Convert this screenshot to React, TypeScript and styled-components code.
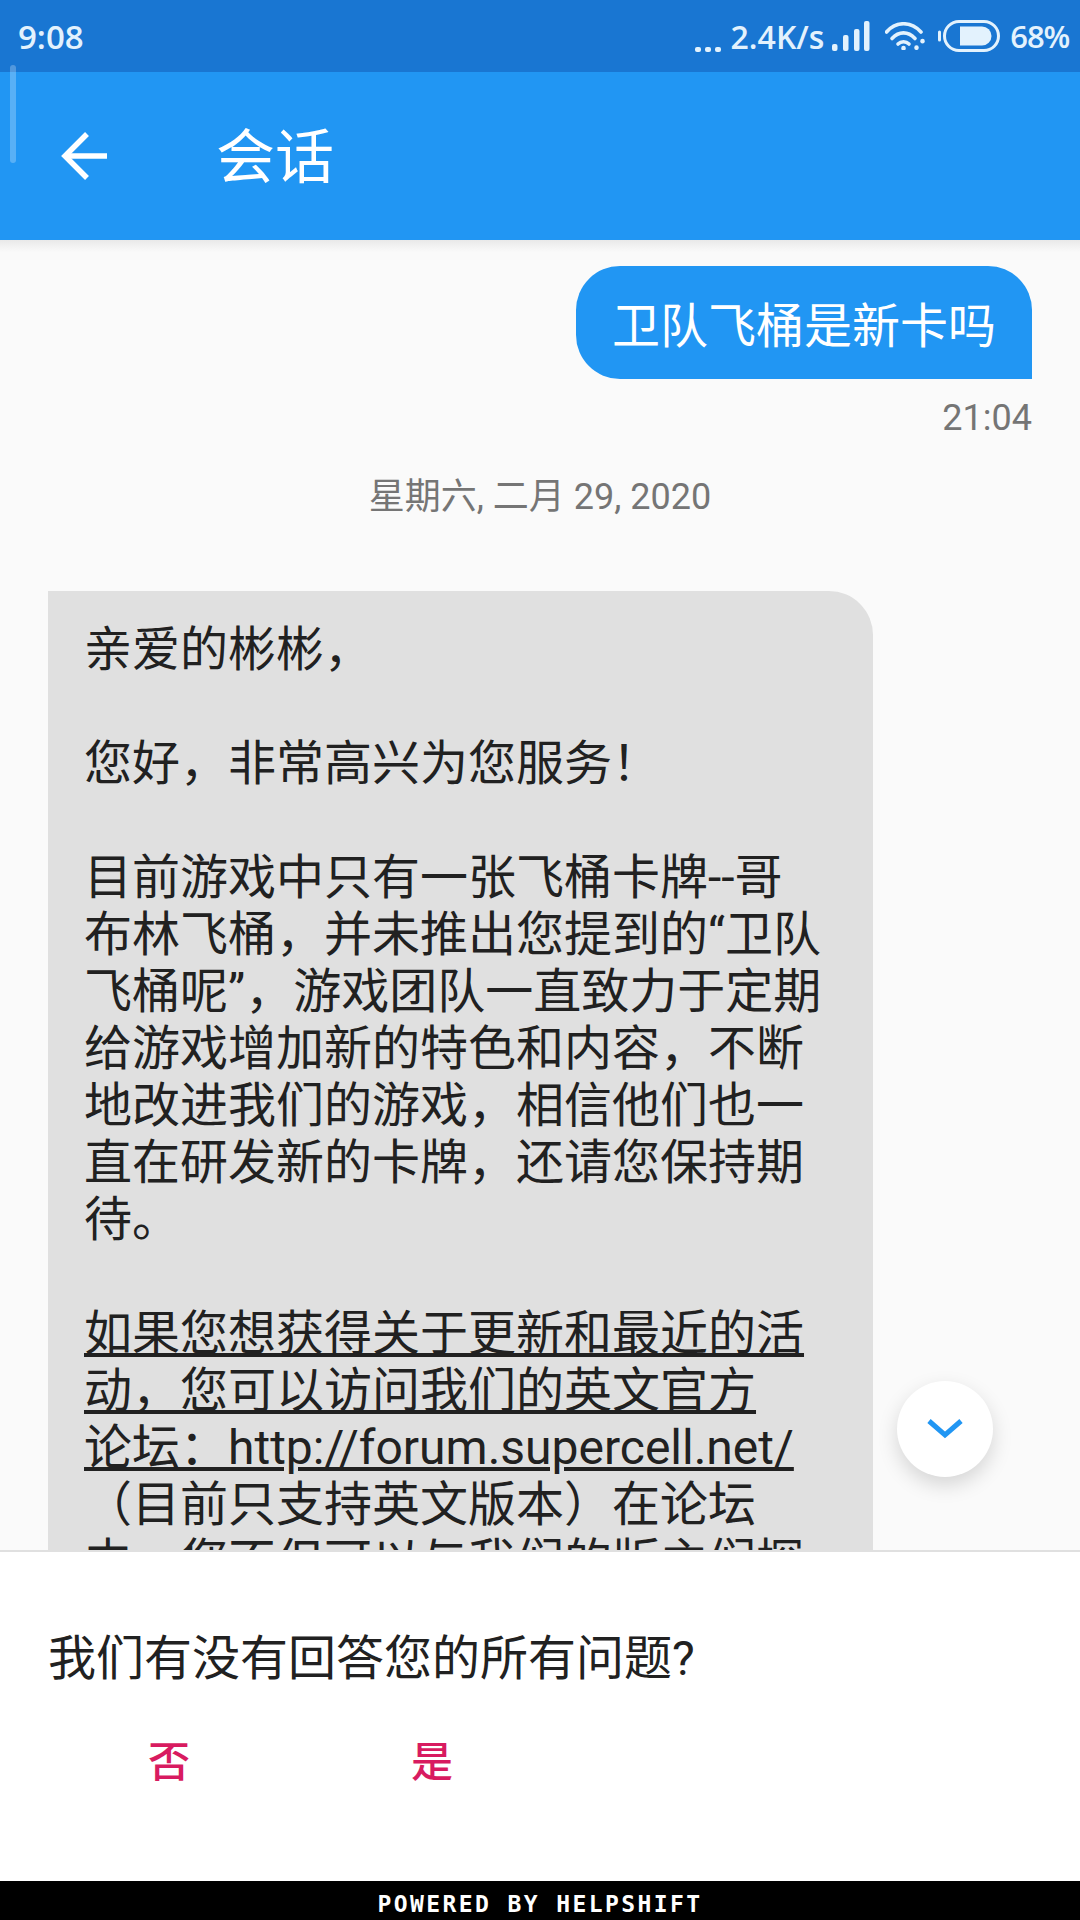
import React from 'react'
import styled, { createGlobalStyle } from 'styled-components'

const GlobalStyle = createGlobalStyle`
  html, body {
    margin: 0;
    padding: 0;
    background: #fafafa;
  }
  * {
    box-sizing: border-box;
  }
`

const Screen = styled.div`
  position: relative;
  width: 1080px;
  height: 1920px;
  display: flex;
  flex-direction: column;
  overflow: hidden;
  background: #fafafa;
  font-family: Roboto, 'Noto Sans CJK SC', sans-serif;
`

const StatusBar = styled.div`
  height: 72px;
  flex: none;
  display: flex;
  align-items: center;
  justify-content: space-between;
  padding: 0 11px 0 18px;
  background: #1976d2;
  color: #e3f2fd;
  font-family: 'Open Sans', sans-serif;
  font-weight: 600;
  font-size: 33px;
`

const StatusRight = styled.div`
  display: flex;
  align-items: center;
`

const Dots = styled.span`
  display: flex;
  gap: 4px;
  margin-top: 26px;
`

const Dot = styled.span`
  width: 6px;
  height: 5px;
  border-radius: 2px;
  background: #e3f2fd;
`

const Speed = styled.span`
  margin-left: 10px;
  font-size: 32px;
`

const StatusIcon = styled.span<{ $gap: number }>`
  display: flex;
  margin-left: ${(p) => p.$gap}px;
`

const Percent = styled.span`
  margin-left: 10px;
  font-size: 31px;
  letter-spacing: -1.2px;
`

const AppBar = styled.div`
  position: relative;
  z-index: 2;
  height: 168px;
  flex: none;
  display: flex;
  align-items: center;
  padding-left: 60px;
  background: #2196f3;
  color: #fff;
`

const Title = styled.h1`
  margin: 2px 0 0 108px;
  font-size: 59px;
  font-weight: 400;
  line-height: 1;
`

const ScrollThumb = styled.div`
  position: absolute;
  left: 10px;
  top: 65px;
  width: 6px;
  height: 98px;
  border-radius: 3px;
  background: rgba(255, 255, 255, 0.25);
  z-index: 3;
`

const Chat = styled.div`
  position: relative;
  flex: 1;
  min-height: 0;
  display: flex;
  flex-direction: column;
  padding: 26px 48px 0;
  overflow: hidden;
  &::before {
    content: '';
    position: absolute;
    left: 0;
    right: 0;
    top: 0;
    height: 12px;
    background: linear-gradient(#e9e9e9, #fafafa);
  }
`

const SentBubble = styled.div`
  position: relative;
  flex: none;
  align-self: flex-end;
  height: 113px;
  display: flex;
  align-items: center;
  padding: 0 36px 2px;
  border-radius: 44px 44px 0 44px;
  background: #2196f3;
  color: #fff;
  font-size: 48px;
`

const SentTime = styled.div`
  flex: none;
  align-self: flex-end;
  margin-top: 18px;
  color: #757575;
  font-size: 36px;
  line-height: 42px;
`

const DateLabel = styled.div`
  flex: none;
  align-self: center;
  margin-top: 37px;
  color: #757575;
  font-size: 36px;
  line-height: 42px;
`

const ReceivedBubble = styled.div`
  flex: none;
  margin-top: 73px;
  width: 825px;
  padding: 30px 36px 40px;
  border-radius: 0 44px 44px 44px;
  background: #e0e0e0;
  color: #212121;
  font-size: 48px;
  line-height: 57px;
  white-space: nowrap;
`

const Line = styled.div<{ $link?: boolean }>`
  min-height: 57px;
  text-decoration: ${(p) => (p.$link ? 'underline' : 'none')};
`

const ScrollButton = styled.div`
  position: absolute;
  left: 897px;
  top: 1141px;
  width: 96px;
  height: 96px;
  display: flex;
  align-items: center;
  justify-content: center;
  border-radius: 50%;
  background: #fff;
  box-shadow: 0 8px 20px rgba(0, 0, 0, 0.15);
`

const Sheet = styled.div`
  position: relative;
  z-index: 2;
  height: 331px;
  flex: none;
  padding: 0 48px;
  background: #fff;
  border-top: 2px solid #e0e0e0;
`

const Question = styled.div`
  margin-top: 78px;
  color: #212121;
  font-size: 48px;
  line-height: 57px;
`

const Answers = styled.div`
  display: flex;
  margin-top: 51px;
`

const Answer = styled.div`
  width: 263px;
  padding-left: 100px;
  color: #d81b60;
  font-size: 42px;
  font-weight: 500;
  line-height: 50px;
`

const Footer = styled.div`
  height: 39px;
  flex: none;
  display: flex;
  align-items: center;
  justify-content: center;
  padding-top: 6px;
  background: #000;
  color: #fff;
  font-family: 'DejaVu Sans Mono', monospace;
  font-weight: 700;
  font-size: 23px;
  letter-spacing: 2.4px;
`

const bubbleLines = [
  '亲爱的彬彬，',
  '',
  '您好，非常高兴为您服务！',
  '',
  '目前游戏中只有一张飞桶卡牌--哥',
  '布林飞桶，并未推出您提到的“卫队',
  '飞桶呢”，游戏团队一直致力于定期',
  '给游戏增加新的特色和内容，不断',
  '地改进我们的游戏，相信他们也一',
  '直在研发新的卡牌，还请您保持期',
  '待。',
  '',
]

const linkLines = [
  '如果您想获得关于更新和最近的活',
  '动，您可以访问我们的英文官方',
  '论坛：http://forum.supercell.net/',
]

const tailLines = [
  '（目前只支持英文版本）在论坛',
  '中，您不但可以与我们的版主们探',
]

const BackArrow = () => (
  <svg width="48" height="48" viewBox="0 0 48 48" fill="none" stroke="#fff" strokeWidth="5.5">
    <path d="M47 24H4" />
    <path d="M27 2 L5 24 L27 46" />
  </svg>
)

const SignalIcon = () => (
  <svg width="38" height="30" viewBox="0 0 38 30" fill="#e3f2fd">
    <rect x="0" y="23" width="5.500" height="7" rx="2" />
    <rect x="11" y="14" width="5.500" height="16" rx="2" />
    <rect x="22" y="8" width="5.500" height="22" rx="2" />
    <rect x="32" y="0" width="5.500" height="30" rx="2" />
  </svg>
)

const WifiIcon = () => (
  <svg width="40" height="28" viewBox="0 0 40 28" fill="none" stroke="#e3f2fd" strokeWidth="3.600" strokeLinecap="round">
    <path d="M1.500 10 C11 -1 26 -1 36 10" />
    <path d="M7 16.500 C14 9 23 9 30 16.500" />
    <path d="M13 22 C16 19 21 19 24 22" />
    <path d="M18.500 26 L18.500 26.300" strokeWidth="4.500" />
    <path d="M31.500 25.500 L31.500 25.800" strokeWidth="4.500" />
    <path d="M37.500 19 L37.500 19.300" strokeWidth="4.500" />
  </svg>
)

const BatteryIcon = () => (
  <svg width="62" height="32" viewBox="0 0 62 32" fill="none">
    <rect x="6.500" y="1.500" width="54" height="29" rx="14.500" stroke="#e3f2fd" strokeWidth="3" />
    <path d="M22 6.500 H44 A9.500 9.500 0 0 1 44 25.500 H22 Z" fill="#e3f2fd" />
    <path d="M1.500 12 V20" stroke="#e3f2fd" strokeWidth="3" strokeLinecap="round" />
  </svg>
)

const ChevronDown = () => (
  <svg width="38" height="24" viewBox="0 0 38 24" fill="none" stroke="#2196f3" strokeWidth="5">
    <path d="M3 4 L19 18 L35 4" />
  </svg>
)

const App = (): JSX.Element => (
  <Screen>
    <GlobalStyle />
    <StatusBar>
      <span>9:08</span>
      <StatusRight>
        <Dots>
          <Dot />
          <Dot />
          <Dot />
        </Dots>
        <Speed>2.4K/s</Speed>
        <StatusIcon $gap={8}>
          <SignalIcon />
        </StatusIcon>
        <StatusIcon $gap={15}>
          <WifiIcon />
        </StatusIcon>
        <StatusIcon $gap={13}>
          <BatteryIcon />
        </StatusIcon>
        <Percent>68%</Percent>
      </StatusRight>
    </StatusBar>
    <ScrollThumb />
    <AppBar>
      <BackArrow />
      <Title>会话</Title>
    </AppBar>
    <Chat>
      <SentBubble>卫队飞桶是新卡吗</SentBubble>
      <SentTime>21:04</SentTime>
      <DateLabel>星期六, 二月 29, 2020</DateLabel>
      <ReceivedBubble>
        {bubbleLines.map((text, index) => (
          <Line key={index}>{text}</Line>
        ))}
        {linkLines.map((text, index) => (
          <Line $link key={index}>{text}</Line>
        ))}
        {tailLines.map((text, index) => (
          <Line key={index}>{text}</Line>
        ))}
      </ReceivedBubble>
      <ScrollButton>
        <ChevronDown />
      </ScrollButton>
    </Chat>
    <Sheet>
      <Question>我们有没有回答您的所有问题?</Question>
      <Answers>
        <Answer>否</Answer>
        <Answer>是</Answer>
      </Answers>
    </Sheet>
    <Footer>POWERED BY HELPSHIFT</Footer>
  </Screen>
)

export default App
